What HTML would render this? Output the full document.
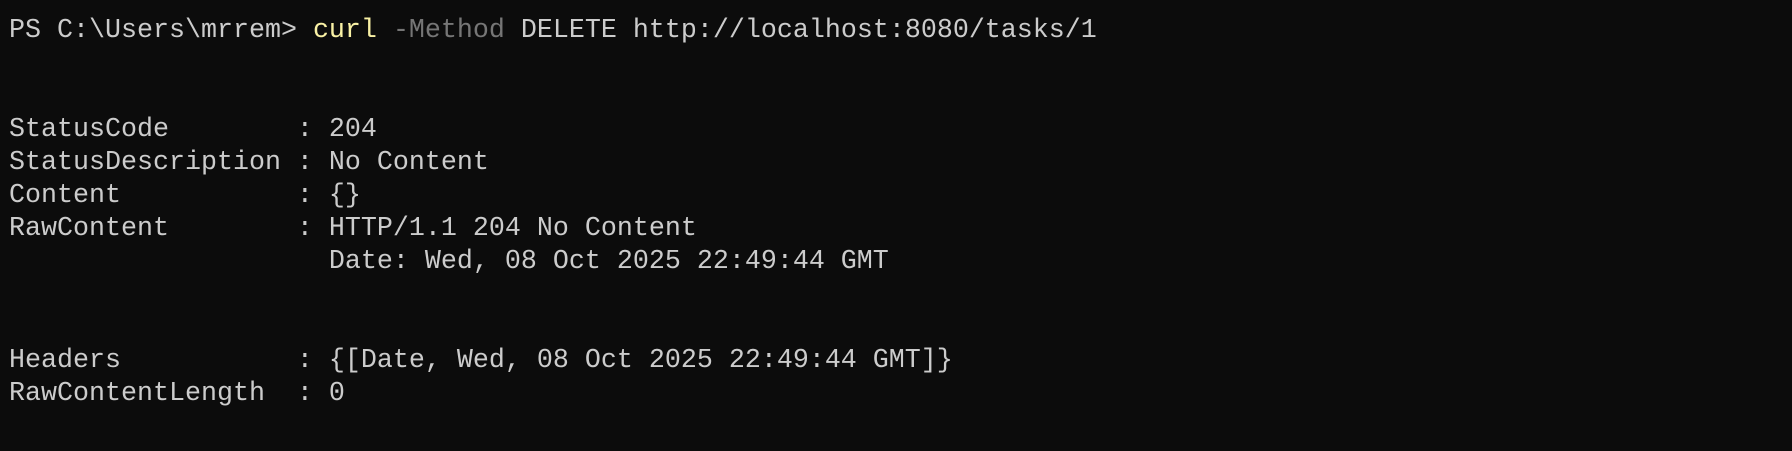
<!DOCTYPE html>
<html><head><style>
html,body{margin:0;padding:0;background:#0c0c0c;width:1792px;height:451px;overflow:hidden}
pre{margin:0;position:absolute;left:9px;top:15px;font-family:"Liberation Mono",monospace;font-size:26.67px;line-height:33px;color:#cccccc;white-space:pre}
.y{color:#f9f1a5}.g{color:#767676}
</style></head><body>
<pre>PS C:\Users\mrrem&gt; <span class="y">curl</span> <span class="g">-Method</span> DELETE http://localhost:8080/tasks/1


StatusCode        : 204
StatusDescription : No Content
Content           : {}
RawContent        : HTTP/1.1 204 No Content
                    Date: Wed, 08 Oct 2025 22:49:44 GMT


Headers           : {[Date, Wed, 08 Oct 2025 22:49:44 GMT]}
RawContentLength  : 0</pre>
</body></html>
